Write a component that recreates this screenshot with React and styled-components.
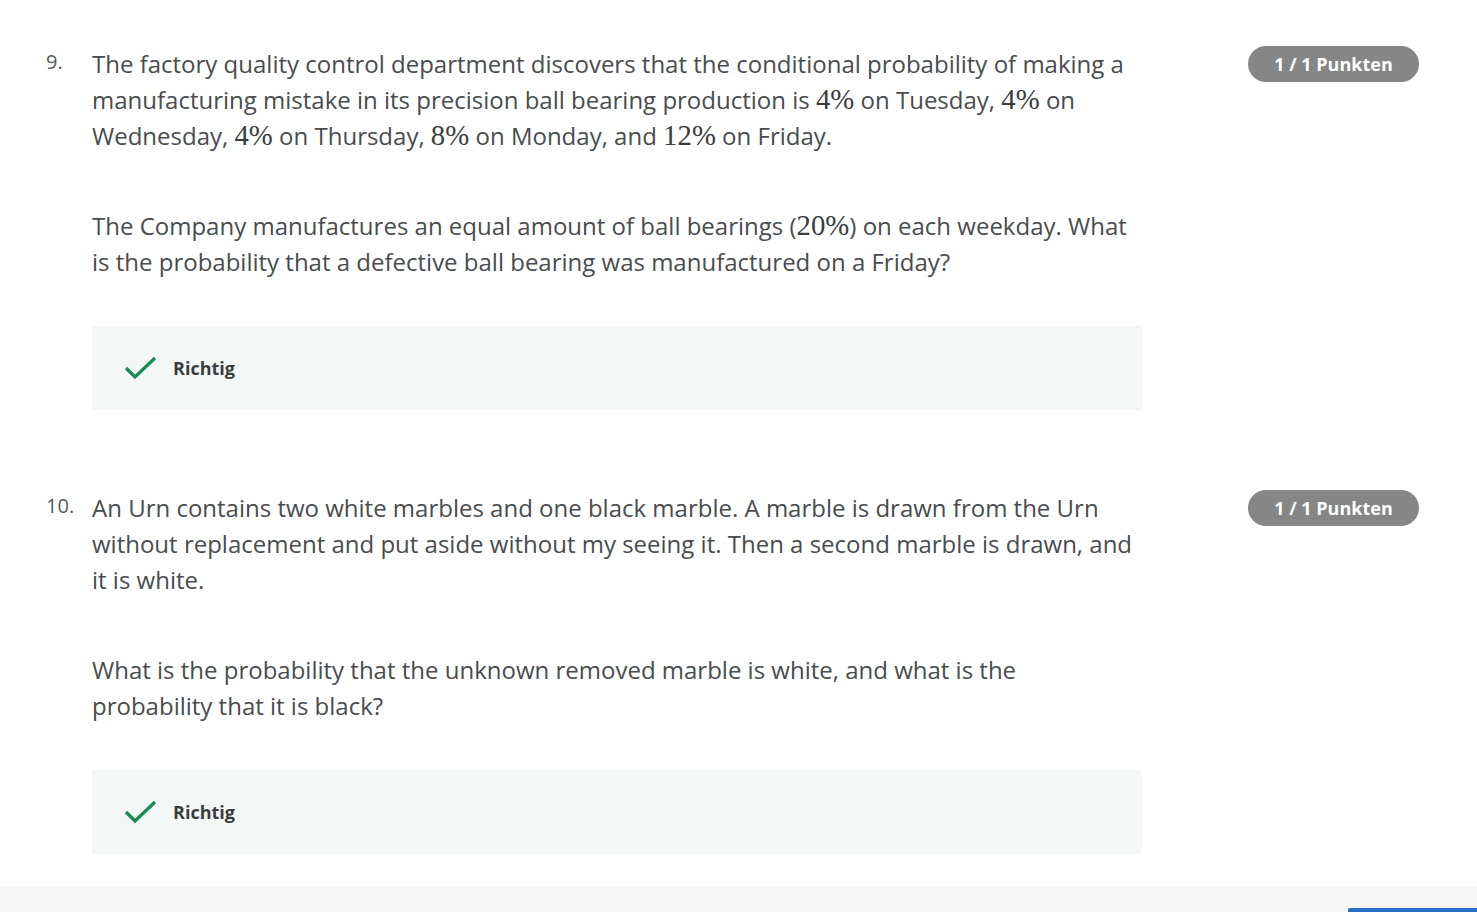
import React from "react";
import styled, { createGlobalStyle } from "styled-components";

const Global = createGlobalStyle`
  body {
    margin: 0;
    background: #fff;
    font-family: "Open Sans", "Noto Sans", sans-serif;
  }
`;

const Page = styled.div`
  width: 1477px;
  height: 912px;
  display: flex;
  flex-direction: column;
  overflow: hidden;
`;

const List = styled.div`
  padding: 46px 0 0 0;
  display: flex;
  flex-direction: column;
  gap: 80px;
`;

const Question = styled.div`
  display: grid;
  grid-template-columns: 92px 1050px 1fr;
`;

const Number = styled.div`
  padding-left: 46px;
  font-size: 20px;
  line-height: 32px;
  color: #565a5c;
`;

const Body = styled.div`
  color: #494c4e;
  font-size: 24px;
  line-height: 36px;
`;

const Para = styled.p`
  margin: 0 0 54px 0;
`;

const LastPara = styled(Para)`
  margin-bottom: 46px;
`;

const M = styled.span`
  font-family: "Liberation Serif", "DejaVu Serif", serif;
  font-size: 1.2em;
  line-height: 1;
  color: #3a3c3e;
`;

const Feedback = styled.div`
  height: 84px;
  background: #f3f8f6;
  display: flex;
  align-items: center;
  padding-left: 32px;
  gap: 15px;
`;

const Label = styled.span`
  font-size: 18px;
  font-weight: 700;
  color: #3a3c3e;
`;

const Side = styled.div`
  display: flex;
  justify-content: flex-end;
  padding-right: 58px;
`;

const Badge = styled.div`
  width: 171px;
  height: 36px;
  border-radius: 18px;
  background: #868686;
  color: #fff;
  font-size: 18px;
  font-weight: 700;
  display: flex;
  align-items: center;
  justify-content: center;
`;

const Footer = styled.div`
  margin-top: 32px;
  flex: 1;
  background: #f6f6f6;
  display: flex;
  justify-content: flex-end;
  align-items: flex-end;
`;

const Bar = styled.div`
  width: 129px;
  height: 4px;
  background: #2a6ecc;
  border-radius: 2px 0 0 0;
`;

const Check = () => (
  <svg width="34" height="28" viewBox="0 0 34 28">
    <path d="M2 14 L11 23 L31 4" fill="none" stroke="#1b8a55" strokeWidth="3.4" />
  </svg>
);

const Item = ({ n, children }) => (
  <Question>
    <Number>{n}.</Number>
    <Body>
      {children}
      <Feedback>
        <Check />
        <Label>Richtig</Label>
      </Feedback>
    </Body>
    <Side>
      <Badge>1 / 1 Punkten</Badge>
    </Side>
  </Question>
);

export default function App() {
  return (
    <Page>
      <Global />
      <List>
        <Item n={9}>
          <Para>
            The factory quality control department discovers that the conditional probability of making a
            manufacturing mistake in its precision ball bearing production is <M>4%</M> on Tuesday, <M>4%</M> on
            Wednesday, <M>4%</M> on Thursday, <M>8%</M> on Monday, and <M>12%</M> on Friday.
          </Para>
          <LastPara>
            The Company manufactures an equal amount of ball bearings (<M>20%</M>) on each weekday. What is the
            probability that a defective ball bearing was manufactured on a Friday?
          </LastPara>
        </Item>
        <Item n={10}>
          <Para>
            An Urn contains two white marbles and one black marble. A marble is drawn from the Urn without
            replacement and put aside without my seeing it. Then a second marble is drawn, and it is white.
          </Para>
          <LastPara>
            What is the probability that the unknown removed marble is white, and what is the
            <br />
            probability that it is black?
          </LastPara>
        </Item>
      </List>
      <Footer>
        <Bar />
      </Footer>
    </Page>
  );
}
